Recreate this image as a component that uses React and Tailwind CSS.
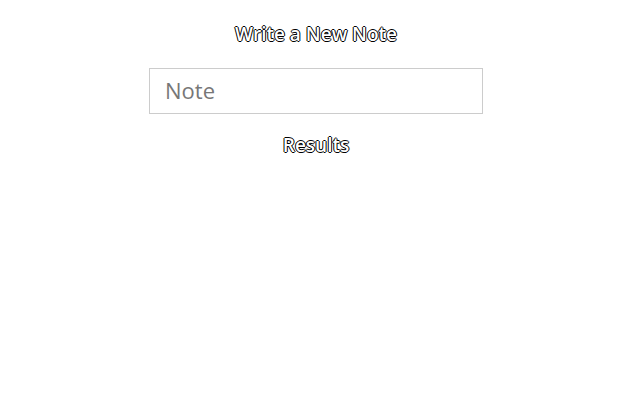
export default function App() {
  const outline = '[text-shadow:1px_0_0_#000,-1px_0_0_#000,0_1px_0_#000,0_-1px_0_#000]';
  return (
    <div className="min-h-[400px] bg-white flex flex-col items-center pt-[22px] pr-[12px] font-['Open_Sans',sans-serif]">
      <h2 className={`text-[19px] font-semibold text-white leading-6 ${outline}`}>Write a New Note</h2>
      <input
        type="text"
        placeholder="Note"
        className="mt-[22px] w-[334px] h-[46px] border border-[#cccccc] px-[15px] pb-[3px] text-[22px] text-[#555] placeholder:text-[#777] outline-none"
      />
      <h3 className={`mt-[19px] text-[19px] font-semibold text-white leading-6 ${outline}`}>Results</h3>
    </div>
  );
}
